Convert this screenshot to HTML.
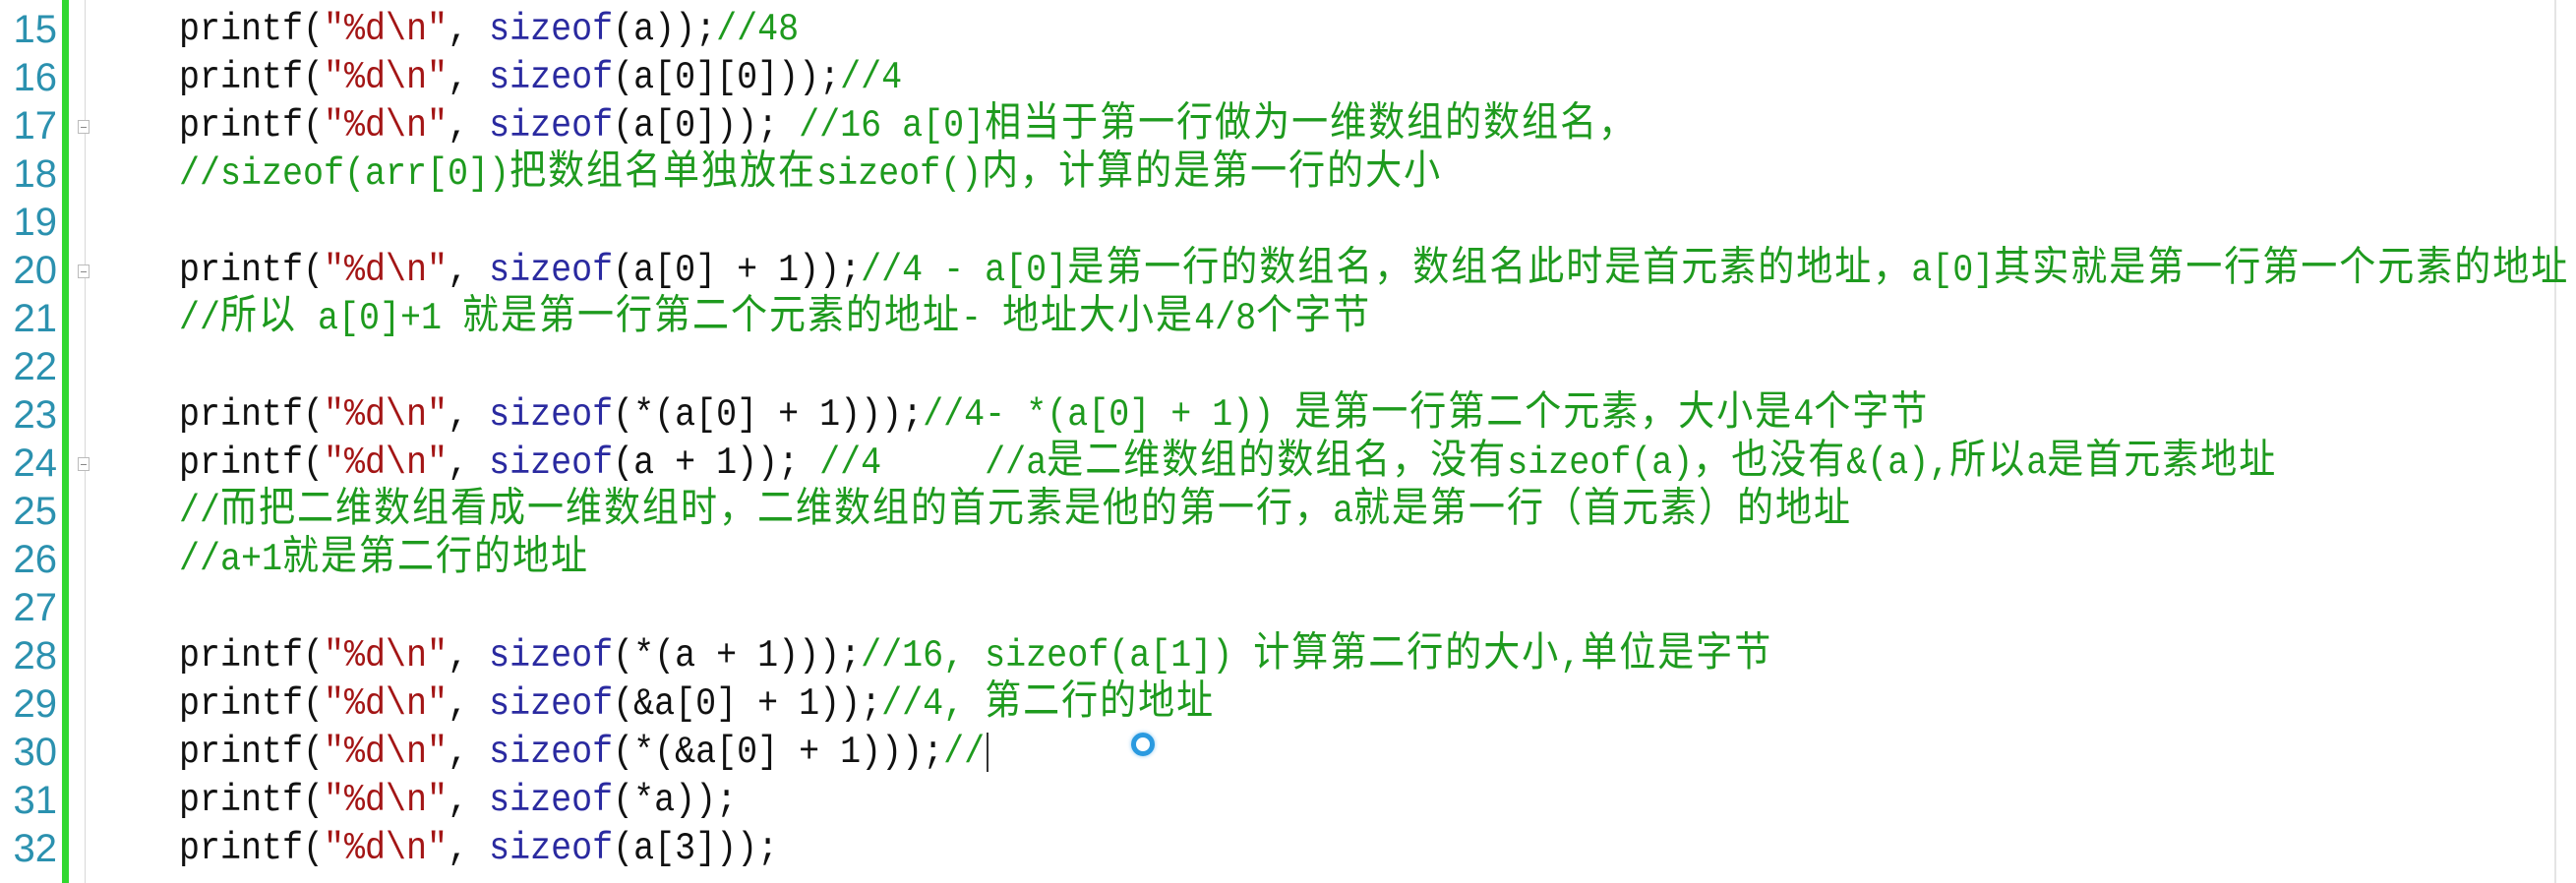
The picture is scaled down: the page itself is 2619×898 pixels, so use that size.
<!DOCTYPE html>
<html><head><meta charset="utf-8"><style>
html,body{margin:0;padding:0;background:#fff;width:2619px;height:898px;overflow:hidden;position:relative}
.ln{position:absolute;left:0;width:58px;text-align:right;font-family:"Liberation Sans Narrow","Liberation Sans",sans-serif;font-size:40px;color:#2b91af;line-height:49px;height:49px}
.bar{position:absolute;left:63px;top:0;width:7px;height:898px;background:#2fd82f}
.vl{position:absolute;left:86px;top:0;width:1px;height:898px;background:#d8d8d8}
.fold{position:absolute;left:79px;width:12px;height:14px;border:1px solid #bbb;background:#fff;box-sizing:border-box}
.fold:after{content:"";position:absolute;left:2px;right:2px;top:6px;height:1px;background:#888}
.l{position:absolute;left:182px;white-space:pre;font-family:"Liberation Mono",monospace;font-size:35px;line-height:49px;height:49px;color:#111;transform:scaleY(1.12);transform-origin:50% 50%}
.s{color:#a31515}.k{color:#2a2aa0}.c{color:#1e9a1e}
.z{font-family:"Noto Sans CJK SC",sans-serif;font-size:37px;letter-spacing:2px;line-height:0}
.edge{position:absolute;left:2597px;top:0;width:2px;height:898px;background:#e4e4e4}
</style></head><body>
<div class="bar"></div><div class="vl"></div><div class="edge"></div>
<div class="ln" style="top:6px">15</div>
<div class="ln" style="top:55px">16</div>
<div class="ln" style="top:104px">17</div>
<div class="ln" style="top:153px">18</div>
<div class="ln" style="top:202px">19</div>
<div class="ln" style="top:251px">20</div>
<div class="ln" style="top:300px">21</div>
<div class="ln" style="top:349px">22</div>
<div class="ln" style="top:398px">23</div>
<div class="ln" style="top:447px">24</div>
<div class="ln" style="top:496px">25</div>
<div class="ln" style="top:545px">26</div>
<div class="ln" style="top:594px">27</div>
<div class="ln" style="top:643px">28</div>
<div class="ln" style="top:692px">29</div>
<div class="ln" style="top:741px">30</div>
<div class="ln" style="top:790px">31</div>
<div class="ln" style="top:839px">32</div>
<div class="fold" style="top:122px"></div>
<div class="fold" style="top:269px"></div>
<div class="fold" style="top:465px"></div>

<div class="l" style="top:6px">printf(<span class="s">"%d\n"</span>, <span class="k">sizeof</span>(a));<span class="c">//48</span></div>
<div class="l" style="top:55px">printf(<span class="s">"%d\n"</span>, <span class="k">sizeof</span>(a[0][0]));<span class="c">//4</span></div>
<div class="l" style="top:104px">printf(<span class="s">"%d\n"</span>, <span class="k">sizeof</span>(a[0])); <span class="c">//16 a[0]<span class="z">相当于第一行做为一维数组的数组名，</span></span></div>
<div class="l" style="top:153px"><span class="c">//sizeof(arr[0])<span class="z">把数组名单独放在</span>sizeof()<span class="z">内，计算的是第一行的大小</span></span></div>
<div class="l" style="top:251px">printf(<span class="s">"%d\n"</span>, <span class="k">sizeof</span>(a[0] + 1));<span class="c">//4 - a[0]<span class="z">是第一行的数组名，数组名此时是首元素的地址，</span>a[0]<span class="z">其实就是第一行第一个元素的地址</span></span></div>
<div class="l" style="top:300px"><span class="c">//<span class="z">所以</span> a[0]+1 <span class="z">就是第一行第二个元素的地址</span>- <span class="z">地址大小是</span>4/8<span class="z">个字节</span></span></div>
<div class="l" style="top:398px">printf(<span class="s">"%d\n"</span>, <span class="k">sizeof</span>(*(a[0] + 1)));<span class="c">//4- *(a[0] + 1)) <span class="z">是第一行第二个元素，大小是</span>4<span class="z">个字节</span></span></div>
<div class="l" style="top:447px">printf(<span class="s">"%d\n"</span>, <span class="k">sizeof</span>(a + 1)); <span class="c">//4     //a<span class="z">是二维数组的数组名，没有</span>sizeof(a)<span class="z">，也没有</span>&amp;(a),<span class="z">所以</span>a<span class="z">是首元素地址</span></span></div>
<div class="l" style="top:496px"><span class="c">//<span class="z">而把二维数组看成一维数组时，二维数组的首元素是他的第一行，</span>a<span class="z">就是第一行（首元素）的地址</span></span></div>
<div class="l" style="top:545px"><span class="c">//a+1<span class="z">就是第二行的地址</span></span></div>
<div class="l" style="top:643px">printf(<span class="s">"%d\n"</span>, <span class="k">sizeof</span>(*(a + 1)));<span class="c">//16, sizeof(a[1]) <span class="z">计算第二行的大小</span>,<span class="z">单位是字节</span></span></div>
<div class="l" style="top:692px">printf(<span class="s">"%d\n"</span>, <span class="k">sizeof</span>(&amp;a[0] + 1));<span class="c">//4, <span class="z">第二行的地址</span></span></div>
<div class="l" style="top:741px">printf(<span class="s">"%d\n"</span>, <span class="k">sizeof</span>(*(&amp;a[0] + 1)));<span class="c">//</span></div>
<div class="l" style="top:790px">printf(<span class="s">"%d\n"</span>, <span class="k">sizeof</span>(*a));</div>
<div class="l" style="top:839px">printf(<span class="s">"%d\n"</span>, <span class="k">sizeof</span>(a[3]));</div>
<div style="position:absolute;left:1003px;top:745px;width:2px;height:40px;background:#333"></div>
<div style="position:absolute;left:1150px;top:745px;width:14px;height:14px;border:5px solid #2a9ae0;border-radius:50%;box-shadow:0 0 4px #8cc8f0"></div>
</body></html>
